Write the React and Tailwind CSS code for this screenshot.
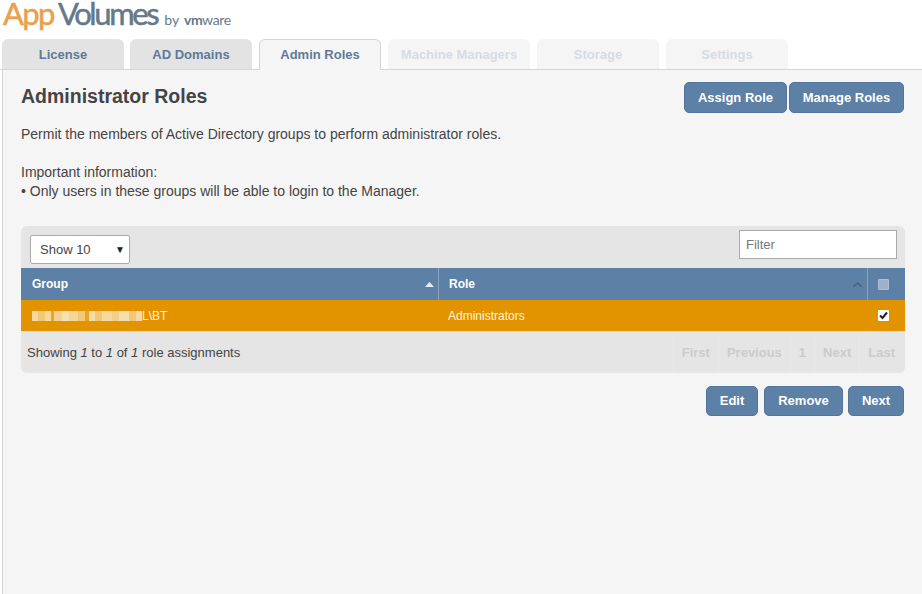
import React from "react";

const tabs = [
  { name: "License", state: "idle", box: "w-[122px]" },
  { name: "AD Domains", state: "idle", box: "w-[122px] ml-[6px]" },
  { name: "Admin Roles", state: "active", box: "w-[122px] ml-[7px]" },
  { name: "Machine Managers", state: "disabled", box: "w-[142px] ml-[7px]" },
  { name: "Storage", state: "disabled", box: "w-[122px] ml-[7px]" },
  { name: "Settings", state: "disabled", box: "w-[122px] ml-[7px]" },
];

const pager = ["First", "Previous", "1", "Next", "Last"];

// pixelated bit of the group name
const blur = [
  ["w-[6px]", "bg-[#f5d9a0]"],
  ["w-[7px]", "bg-[#f0c878]"],
  ["w-[6px]", "bg-[#f5d9a0]"],
  ["w-[3px]", "bg-[#e9a523]"],
  ["w-[8px]", "bg-[#f3d292]"],
  ["w-[7px]", "bg-[#f7e0b0]"],
  ["w-[9px]", "bg-[#f4d69a]"],
  ["w-[7px]", "bg-[#f0c878]"],
  ["w-[4px]", "bg-[#e9a523]"],
  ["w-[6px]", "bg-[#f5dba5]"],
  ["w-[7px]", "bg-[#f0c878]"],
  ["w-[10px]", "bg-[#f5d9a0]"],
  ["w-[7px]", "bg-[#f2cf8c]"],
  ["w-[10px]", "bg-[#f6dfae]"],
  ["w-[7px]", "bg-[#f0c878]"],
  ["w-[6px]", "bg-[#f5d9a0]"],
];

const Btn = ({ children, className = "" }) => (
  <button
    className={`h-[30px] rounded-[5px] bg-[#5d80a6] border border-[#53759b] text-white text-[13px] font-bold ${className}`}
  >
    {children}
  </button>
);

const App = () => {
  return (
    <div className="w-[922px] h-[594px] overflow-hidden bg-white font-['Liberation_Sans',Arial,sans-serif] text-[#444]">
      <div className="h-[39px] pl-[3px] pt-[1px] flex items-baseline whitespace-nowrap font-['Lato',sans-serif]">
        <span className="text-[31px] leading-[24px] tracking-[-1.6px] text-[#e9a04c] [-webkit-text-stroke:0.5px_#e9a04c]">App</span>
        <span className="ml-[4px] text-[31px] leading-[24px] tracking-[-2.4px] text-[#64798a] [-webkit-text-stroke:0.5px_#64798a]">Volumes</span>
        <span className="ml-[7px] text-[14px] leading-[16px] text-[#64798a]">by</span>
        <span className="ml-[5px] text-[14px] leading-[16px] font-bold tracking-[-0.6px] text-[#64798a]">vm</span>
        <span className="text-[14px] leading-[16px] tracking-[-0.3px] text-[#64798a]">ware</span>
      </div>

      <div className="h-[31px] pl-[2px] flex border-b border-[#d5d5d5]">
        {tabs.map((tab) => (
          <div
            key={tab.name}
            className={`${tab.box} h-[30px] rounded-t-[6px] flex items-center justify-center text-[13px] font-bold ${
              tab.state === "active"
                ? "h-[31px] bg-[#f5f5f5] border border-b-0 border-[#d5d5d5] text-[#60799a]"
                : tab.state === "idle"
                ? "pt-[1px] bg-[#e3e3e3] text-[#60799a]"
                : "pt-[1px] bg-[#f5f5f5] text-[#d5dce5]"
            }`}
          >
            {tab.name}
          </div>
        ))}
      </div>

      <div className="ml-[2px] h-[524px] bg-[#f5f5f5] border-l border-[#d5d5d5] pl-[18px] pr-[17px]">
        <div className="pt-[12px] flex justify-between items-start pr-[1px]">
          <h1 className="pt-[1px] text-[19.5px] leading-[26px] font-bold text-[#444]">Administrator Roles</h1>
          <div className="flex gap-[2px]">
            <Btn className="w-[103px] h-[31px]">Assign Role</Btn>
            <Btn className="w-[115px] h-[31px]">Manage Roles</Btn>
          </div>
        </div>

        <p className="mt-[12px] text-[14px] leading-[19px] text-[#444]">
          Permit the members of Active Directory groups to perform administrator roles.
        </p>
        <p className="mt-[19px] text-[14px] leading-[19px] text-[#444]">Important information:</p>
        <p className="text-[14px] leading-[19px] text-[#444]">• Only users in these groups will be able to login to the Manager.</p>

        <div className="mt-[25px] rounded-[6px] bg-[#e5e5e5] h-[147px]">
          <div className="h-[42px] pl-[9px] pr-[8px] flex justify-between">
            <div className="mt-[9px] w-[100px] h-[29px] bg-white border border-[#aaa] rounded-[2px] pl-[9px] pr-[4px] flex items-center justify-between text-[13px] text-[#444]">
              <span>Show 10</span>
              <span className="text-[10px] text-[#222]">▼</span>
            </div>
            <input
              placeholder="Filter"
              readOnly
              className="mt-[4px] w-[158px] h-[29px] bg-white border border-[#aaa] px-[6px] text-[13px] placeholder:text-[#777] outline-none"
            />
          </div>

          <div className="flex h-[32px] bg-[#5d80a6] text-white text-[12px] font-bold">
            <div className="w-[418px] border-r border-[#8aa3bf] pl-[11px] pr-[4px] flex items-center justify-between">
              <span>Group</span>
              <svg width="9" height="5" viewBox="0 0 9 5"><path d="M0 5L4.5 0L9 5Z" fill="#e6edf4" /></svg>
            </div>
            <div className="w-[429px] border-r border-[#8aa3bf] pl-[10px] pr-[5px] flex items-center justify-between">
              <span>Role</span>
              <svg width="9" height="5" viewBox="0 0 9 5"><path d="M0.5 4.5L4.5 1L8.5 4.5" fill="none" stroke="#47637f" strokeWidth="1.6" /></svg>
            </div>
            <div className="flex-1 flex items-center justify-center pr-[6px]">
              <div className="w-[11px] h-[11px] bg-[#9db2c9] border border-[#aebfd2] rounded-[1px]"></div>
            </div>
          </div>

          <div className="flex h-[32px] bg-[#e29300] border-b border-[#f3d9a4] text-[#fdf3dc] text-[12px]">
            <div className="w-[418px] pl-[11px] flex items-center">
              <div className="flex h-[10px]">
                {blur.map(([w, c], i) => (
                  <div key={i} className={`${w} ${c} h-full`}></div>
                ))}
              </div>
              <span>L\BT</span>
            </div>
            <div className="w-[429px] pl-[9px] flex items-center">Administrators</div>
            <div className="flex-1 flex items-center justify-center pr-[6px]">
              <div className="w-[11px] h-[11px] bg-white rounded-[1px] flex items-center justify-center">
                <svg width="9" height="9" viewBox="0 0 9 9"><path d="M1 4.5L3.5 7L8 1.5" fill="none" stroke="#222" strokeWidth="2" /></svg>
              </div>
            </div>
          </div>

          <div className="h-[41px] pl-[6px] pr-[2px] flex items-center justify-between">
            <span className="text-[13px] text-[#444]">
              Showing <i>1</i> to <i>1</i> of <i>1</i> role assignments
            </span>
            <div className="flex h-[38px] text-[13px] font-bold text-[#ccc]">
              {pager.map((p) => (
                <div key={p} className="px-[8px] flex items-center border-l border-[#e9e9e9]">
                  {p}
                </div>
              ))}
            </div>
          </div>
        </div>

        <div className="mt-[13px] flex justify-end pr-[1px]">
          <Btn className="w-[52px]">Edit</Btn>
          <Btn className="w-[79px] ml-[6px]">Remove</Btn>
          <Btn className="w-[56px] ml-[5px]">Next</Btn>
        </div>
      </div>
    </div>
  );
};

export default App;
